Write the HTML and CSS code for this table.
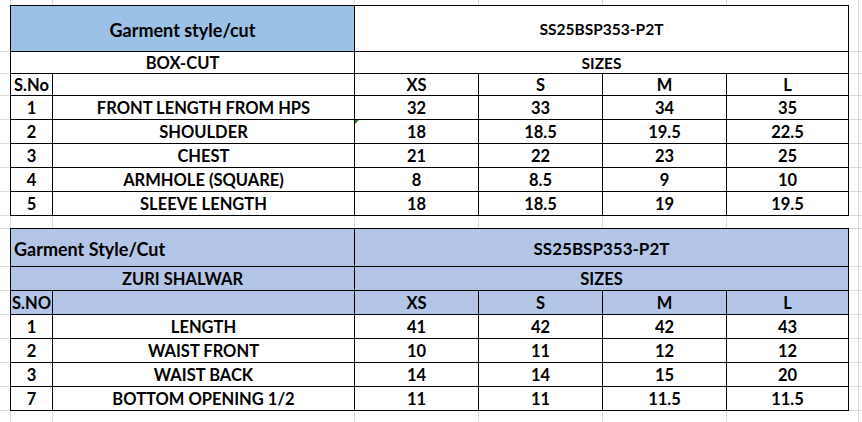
FILE: index.html
```html
<!DOCTYPE html>
<html>
<head>
<meta charset="utf-8">
<link rel="stylesheet" href="styles.css">
</head>
<body>
<div class="sheet">
  <div class="grid t1">
    <div class="c span2 fill-a title">Garment style/cut</div>
    <div class="c span4 small">SS25BSP353-P2T</div>
    <div class="c span2">BOX-CUT</div>
    <div class="c span4 small">SIZES</div>
    <div class="c">S.No</div><div class="c"></div><div class="c">XS</div><div class="c">S</div><div class="c">M</div><div class="c">L</div>
    <div class="c">1</div><div class="c">FRONT LENGTH FROM HPS</div><div class="c">32</div><div class="c">33</div><div class="c">34</div><div class="c">35</div>
    <div class="c">2</div><div class="c">SHOULDER</div><div class="c flag">18<span class="tri"></span></div><div class="c">18.5</div><div class="c">19.5</div><div class="c">22.5</div>
    <div class="c">3</div><div class="c">CHEST</div><div class="c">21</div><div class="c">22</div><div class="c">23</div><div class="c">25</div>
    <div class="c">4</div><div class="c">ARMHOLE (SQUARE)</div><div class="c">8</div><div class="c">8.5</div><div class="c">9</div><div class="c">10</div>
    <div class="c">5</div><div class="c">SLEEVE LENGTH</div><div class="c">18</div><div class="c">18.5</div><div class="c">19</div><div class="c">19.5</div>
  </div>
  <div class="grid t2">
    <div class="c span2 fill-b left title">Garment Style/Cut</div>
    <div class="c span4 fill-b big">SS25BSP353-P2T</div>
    <div class="c span2 fill-b">ZURI SHALWAR</div>
    <div class="c span4 fill-b">SIZES</div>
    <div class="c fill-b left tight">S.NO</div><div class="c fill-b"></div><div class="c fill-b">XS</div><div class="c fill-b">S</div><div class="c fill-b">M</div><div class="c fill-b">L</div>
    <div class="c">1</div><div class="c">LENGTH</div><div class="c">41</div><div class="c">42</div><div class="c">42</div><div class="c">43</div>
    <div class="c">2</div><div class="c">WAIST FRONT</div><div class="c">10</div><div class="c">11</div><div class="c">12</div><div class="c">12</div>
    <div class="c">3</div><div class="c">WAIST BACK</div><div class="c">14</div><div class="c">14</div><div class="c">15</div><div class="c">20</div>
    <div class="c">7</div><div class="c">BOTTOM OPENING 1/2</div><div class="c">11</div><div class="c">11</div><div class="c">11.5</div><div class="c">11.5</div>
  </div>
</div>
</body>
</html>
```
FILE: styles.css
```css
html, body {
  margin: 0;
  padding: 0;
  background: #fff;
}

.sheet {
  box-sizing: border-box;
  width: 862px;
  height: 422px;
  overflow: hidden;
  padding: 5px 0 0 10px;
  font-family: Lato, "Liberation Sans", sans-serif;
  font-weight: 700;
  font-size: 16.5px;
  color: #000;
  background-color: #fff;
  background-repeat: no-repeat;
  background-image:
    linear-gradient(#dadada, #dadada), linear-gradient(#dadada, #dadada),
    linear-gradient(#dadada, #dadada), linear-gradient(#dadada, #dadada),
    linear-gradient(#dadada, #dadada), linear-gradient(#dadada, #dadada),
    linear-gradient(#dadada, #dadada),
    linear-gradient(#dadada, #dadada), linear-gradient(#dadada, #dadada),
    linear-gradient(#dadada, #dadada), linear-gradient(#dadada, #dadada),
    linear-gradient(#dadada, #dadada), linear-gradient(#dadada, #dadada),
    linear-gradient(#dadada, #dadada), linear-gradient(#dadada, #dadada),
    linear-gradient(#dadada, #dadada), linear-gradient(#dadada, #dadada),
    linear-gradient(#dadada, #dadada), linear-gradient(#dadada, #dadada),
    linear-gradient(#dadada, #dadada), linear-gradient(#dadada, #dadada),
    linear-gradient(#dadada, #dadada), linear-gradient(#dadada, #dadada);
  background-size:
    1px 100%, 1px 100%, 1px 100%, 1px 100%, 1px 100%, 1px 100%, 1px 100%,
    100% 1px, 100% 1px, 100% 1px, 100% 1px, 100% 1px, 100% 1px, 100% 1px, 100% 1px,
    100% 1px, 100% 1px, 100% 1px, 100% 1px, 100% 1px, 100% 1px, 100% 1px, 100% 1px;
  background-position:
    10px 0, 52px 0, 354px 0, 478px 0, 602px 0, 726px 0, 858px 0,
    0 51px, 0 73px, 0 95px, 0 119px, 0 143px, 0 167px, 0 191px, 0 215px,
    0 228px, 0 266px, 0 290px, 0 314px, 0 338px, 0 362px, 0 386px, 0 410px;
}

.grid {
  display: grid;
  grid-template-columns: 41px 301px 123px 123px 123px 121px;
  gap: 1px;
  width: max-content;
  background: #000;
  border: 1px solid #000;
}

.t1 {
  grid-template-rows: 45px 21px 21px repeat(5, 23px);
}

.t2 {
  margin-top: 12px;
  grid-template-rows: 37px 23px 23px repeat(4, 23px);
}

.c {
  position: relative;
  display: flex;
  align-items: center;
  justify-content: center;
  background: #fff;
  white-space: nowrap;
  line-height: 1;
  padding-top: 2px;
}

.span2 { grid-column: span 2; }
.span4 { grid-column: span 4; }

.fill-a { background: #9bc2e6; }
.fill-b { background: #b4c6e7; }

.title { font-size: 18px; }
.small { font-size: 15.5px; }
.big { font-size: 17px; }

.left {
  justify-content: flex-start;
  padding-left: 3px;
}

.tight { padding-left: 1px; }

.tri {
  position: absolute;
  left: 0;
  top: 0;
  width: 0;
  height: 0;
  border-top: 4px solid #1f8a3c;
  border-right: 4px solid transparent;
}
```
